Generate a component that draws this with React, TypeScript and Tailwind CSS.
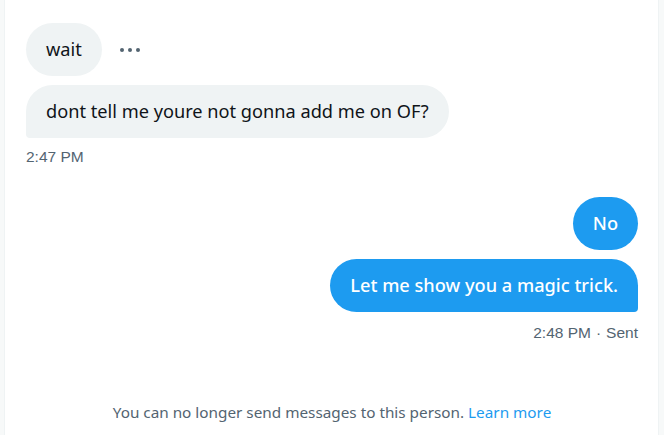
import React from "react";

const font = { fontFamily: '"Noto Sans", "Open Sans", sans-serif' };

const Dots = () => (
  <button type="button" className="ml-[18px] flex h-8 items-center gap-[4px]">
    <span className="h-[4px] w-[4px] rounded-full bg-[#536471]" />
    <span className="h-[4px] w-[4px] rounded-full bg-[#536471]" />
    <span className="h-[4px] w-[4px] rounded-full bg-[#536471]" />
  </button>
);

export default function App() {
  return (
    <div className="flex h-[435px] w-[664px] bg-[#f7f9f9]">
      <div className="ml-[4px] mr-[5px] flex flex-1 flex-col border-x border-[#eff3f4] bg-white pl-[21px] pr-[20px] pt-[23px]">
        {/* received */}
        <div className="flex items-center">
          <div className="rounded-[27px] bg-[#eff3f4] px-[20px] py-[13px] text-[18.2px] leading-[27px] text-[#0f1419] [font-family:'Noto_Sans',sans-serif]">
            wait
          </div>
          <Dots />
        </div>
        <div className="mt-[9px] flex">
          <div className="rounded-[27px] rounded-bl-[4px] bg-[#eff3f4] px-[20px] py-[13px] text-[18.2px] leading-[27px] text-[#0f1419] [font-family:'Noto_Sans',sans-serif]">
            dont tell me youre not gonna add me on OF?
          </div>
        </div>
        <div className="mt-[9px] text-[15.5px] leading-[20px] text-[#536471] [font-family:'Liberation_Sans',sans-serif]">
          2:47 PM
        </div>

        {/* sent */}
        <div className="mt-[30px] flex justify-end">
          <div className="rounded-[27px] bg-[#1d9bf0] px-[20px] py-[13px] text-[18.2px] font-medium leading-[27px] text-white [font-family:'Noto_Sans',sans-serif]">
            No
          </div>
        </div>
        <div className="mt-[9px] flex justify-end">
          <div className="rounded-[27px] rounded-br-[4px] bg-[#1d9bf0] px-[20px] py-[13px] text-[18.2px] font-medium leading-[27px] text-white [font-family:'Noto_Sans',sans-serif]">
            Let me show you a magic trick.
          </div>
        </div>
        <div className="mt-[11px] flex justify-end text-[15.5px] leading-[20px] text-[#536471] [font-family:'Liberation_Sans',sans-serif]">
          2:48 PM<span className="mx-[5px]">·</span>Sent
        </div>

        <div className="mt-auto mb-[12px] text-center text-[15.3px] leading-[22px] text-[#536471]" style={font}>
          You can no longer send messages to this person.{" "}
          <span className="text-[#1d9bf0]">Learn more</span>
        </div>
      </div>
    </div>
  );
}
